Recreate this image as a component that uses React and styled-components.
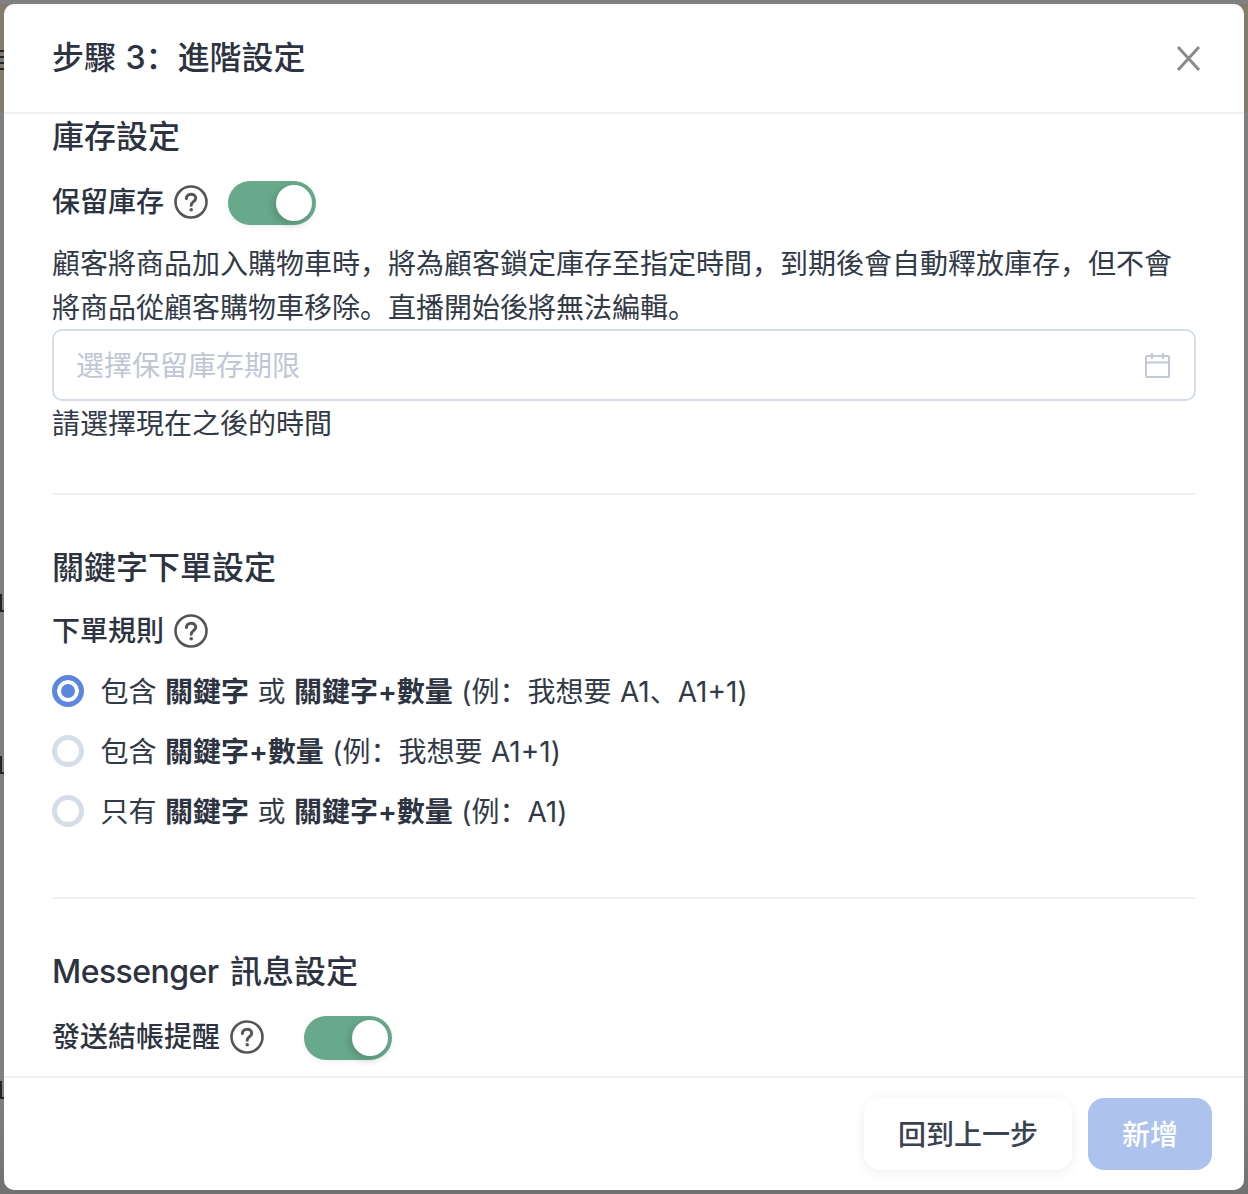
import styled, { createGlobalStyle } from "styled-components";

const GlobalStyle = createGlobalStyle`
  * {
    box-sizing: border-box;
  }
  html, body {
    margin: 0;
    padding: 0;
  }
  body {
    font-family: Inter, "Noto Sans CJK SC", "Noto Sans CJK TC", sans-serif;
    color: #333a47;
  }
`;

const Overlay = styled.div`
  position: relative;
  width: 1248px;
  height: 1194px;
  padding: 4px;
  overflow: hidden;
  background: linear-gradient(
    #808080 0 4px,
    #837b6b 4px 112px,
    #7f7f7f 112px 1100px,
    #727272 1190px
  );
`;

const PageMark = styled.span`
  position: absolute;
  left: 0;
  top: ${(p) => p.$top}px;
  width: 4px;
  height: 18px;
  border-left: 2px solid #22252c;
  border-bottom: 2px solid #22252c;
`;

const MenuMark = styled.span`
  position: absolute;
  left: 0;
  top: 50px;
  width: 4px;
  height: 20px;
  background: repeating-linear-gradient(#22252c 0 2px, transparent 2px 6px);
`;

const Modal = styled.div`
  position: relative;
  height: 100%;
  display: flex;
  flex-direction: column;
  background: #fff;
  border-radius: 10px;
  overflow: hidden;
`;

const Header = styled.header`
  flex: none;
  height: 110px;
  padding: 0 42px 0 48px;
  display: flex;
  align-items: center;
  justify-content: space-between;
  border-bottom: 2px solid #f0f1f2;
`;

const Title = styled.h1`
  margin: 0;
  font-size: 32px;
  line-height: 44px;
  font-weight: 500;
  color: #2d3340;
  word-spacing: 1px;
`;

const CloseButton = styled.button`
  width: 28px;
  height: 28px;
  padding: 0;
  border: 0;
  background: none;
  display: flex;
  color: #8a8a8a;
`;

const Body = styled.div`
  flex: 1;
  min-height: 0;
  overflow: hidden;
  padding: 1px 48px 0;
`;

const Section = styled.section`
  padding-bottom: ${(p) => p.$bottom || 0}px;
  padding-top: ${(p) => p.$top || 0}px;
  border-bottom: ${(p) => (p.$divider ? "2px solid #f0f1f2" : "0")};
`;

const SectionTitle = styled.h2`
  margin: 0;
  font-size: 32px;
  line-height: 44px;
  font-weight: 500;
  color: #2d3340;
`;

const LatinWord = styled.span`
  letter-spacing: -0.55px;
  margin-right: 3px;
`;

const FieldRow = styled.div`
  display: flex;
  align-items: center;
  height: 44px;
  margin-top: ${(p) => p.$top}px;
`;

const Label = styled.span`
  margin-bottom: 2px;
  font-size: 28px;
  line-height: 44px;
  font-weight: 500;
  color: #2d3340;
`;

const HelpIcon = styled.svg`
  flex: none;
  width: 34px;
  height: 34px;
  margin: 0 0 2px 10px;
  color: #555;
`;

const Toggle = styled.span`
  flex: none;
  width: 88px;
  height: 44px;
  margin-left: ${(p) => p.$left}px;
  padding: 4px;
  display: flex;
  justify-content: flex-end;
  border-radius: 22px;
  background: #68a98c;
  box-shadow: 0 2px 6px rgba(0, 0, 0, 0.06);
`;

const Knob = styled.span`
  width: 36px;
  height: 36px;
  border-radius: 50%;
  background: #fff;
  box-shadow: -3px 3px 8px rgba(0, 0, 0, 0.16);
`;

const Description = styled.p`
  margin: 17px 0 -1px;
  font-size: 28px;
  line-height: 44px;
  color: #333a47;
`;

const DateInput = styled.div`
  height: 72px;
  padding: 0 24px 0 22px;
  display: flex;
  align-items: center;
  justify-content: space-between;
  border: 2px solid #d5dde6;
  border-radius: 10px;
`;

const Placeholder = styled.span`
  margin-bottom: 2px;
  font-size: 28px;
  color: #c0c6d4;
`;

const Hint = styled.div`
  padding-top: 1px;
  height: 45px;
  font-size: 28px;
  line-height: 44px;
  color: #333a47;
`;

const RadioList = styled.div`
  margin-top: 7px;
`;

const RadioRow = styled.label`
  height: 60px;
  display: flex;
  align-items: center;
  gap: 16.5px;
  font-size: 28px;
  color: #333a47;
  white-space: pre;
  word-spacing: 0.6px;

  b {
    font-weight: 600;
    color: #2d3340;
  }
`;

const RadioText = styled.span`
  margin-bottom: 2px;
`;

const RadioMark = styled.span`
  flex: none;
  width: 32px;
  height: 32px;
  border-radius: 50%;
  border: 5px solid ${(p) => (p.$checked ? "#5d86e0" : "#d5dee8")};
  background: ${(p) => (p.$checked ? "#5d86e0" : "#fff")};
  box-shadow: ${(p) => (p.$checked ? "inset 0 0 0 4px #fff" : "none")};
`;

const Footer = styled.footer`
  flex: none;
  height: 114px;
  padding: 20px 32px 0 0;
  display: flex;
  justify-content: flex-end;
  gap: 16px;
  border-top: 2px solid #f0f1f2;
`;

const Button = styled.button`
  height: 72px;
  width: ${(p) => p.$width}px;
  padding: 0 0 2px;
  border: 0;
  border-radius: 16px;
  font-family: inherit;
  font-size: 28px;
  font-weight: 500;
  color: ${(p) => (p.$primary ? "#fff" : "#3b4252")};
  background: ${(p) => (p.$primary ? "#aec2ee" : "#fff")};
  box-shadow: ${(p) => (p.$primary ? "none" : "0 2px 14px rgba(0, 0, 0, 0.07)")};
`;

const Help = () => (
  <HelpIcon viewBox="0 0 34 34" fill="none">
    <circle cx="17" cy="17" r="15.5" stroke="currentColor" strokeWidth="2.6" />
    <path
      d="M12.4 13.6c0-2.7 2-4.3 4.7-4.3s4.6 1.6 4.6 3.9c0 3.4-4.5 3.4-4.5 7"
      stroke="currentColor"
      strokeWidth="3"
      strokeLinecap="round"
    />
    <circle cx="17.2" cy="24.8" r="1.8" fill="currentColor" />
  </HelpIcon>
);

const CalendarIcon = () => (
  <svg width="26" height="26" viewBox="0 0 26 26" fill="none" stroke="#c3c8d6" strokeWidth="2">
    <rect x="2" y="4" width="23" height="21" rx="1" />
    <path d="M2 10.5h23M8 1v6M19 1v6" />
  </svg>
);

const CloseIcon = () => (
  <svg width="28" height="28" viewBox="0 0 28 28" fill="none" stroke="currentColor" strokeWidth="3">
    <path d="M4 3l21 23M25 3L4 26" />
  </svg>
);

const SwitchOn = ({ left }) => (
  <Toggle $left={left}>
    <Knob />
  </Toggle>
);

const rules = [
  {
    checked: true,
    content: (
      <>
        包含 <b>關鍵字</b> 或 <b>關鍵字+數量</b> (例：我想要 A1、A1+1)
      </>
    ),
  },
  {
    checked: false,
    content: (
      <>
        包含 <b>關鍵字+數量</b> (例：我想要 A1+1)
      </>
    ),
  },
  {
    checked: false,
    content: (
      <>
        只有 <b>關鍵字</b> 或 <b>關鍵字+數量</b> (例：A1)
      </>
    ),
  },
];

export default function App() {
  return (
    <>
      <GlobalStyle />
      <Overlay>
        <MenuMark />
        <PageMark $top={594} />
        <PageMark $top={756} />
        <PageMark $top={1081} />
        <Modal>
          <Header>
            <Title>步驟 3：進階設定</Title>
            <CloseButton>
              <CloseIcon />
            </CloseButton>
          </Header>
          <Body>
            <Section $divider $bottom={47}>
              <SectionTitle>庫存設定</SectionTitle>
              <FieldRow $top={22}>
                <Label>保留庫存</Label>
                <Help />
                <SwitchOn left={20} />
              </FieldRow>
              <Description>
                顧客將商品加入購物車時，將為顧客鎖定庫存至指定時間，到期後會自動釋放庫存，但不會將商品從顧客購物車移除。直播開始後將無法編輯。
              </Description>
              <DateInput>
                <Placeholder>選擇保留庫存期限</Placeholder>
                <CalendarIcon />
              </DateInput>
              <Hint>請選擇現在之後的時間</Hint>
            </Section>
            <Section $divider $top={51} $bottom={56}>
              <SectionTitle>關鍵字下單設定</SectionTitle>
              <FieldRow $top={20}>
                <Label>下單規則</Label>
                <Help />
              </FieldRow>
              <RadioList>
                {rules.map((rule, i) => (
                  <RadioRow key={i}>
                    <RadioMark $checked={rule.checked} />
                    <RadioText>{rule.content}</RadioText>
                  </RadioRow>
                ))}
              </RadioList>
            </Section>
            <Section $top={51}>
              <SectionTitle>
                <LatinWord>Messenger</LatinWord> 訊息設定
              </SectionTitle>
              <FieldRow $top={22}>
                <Label>發送結帳提醒</Label>
                <Help />
                <SwitchOn left={40} />
              </FieldRow>
            </Section>
          </Body>
          <Footer>
            <Button $width={208}>回到上一步</Button>
            <Button $primary $width={124}>
              新增
            </Button>
          </Footer>
        </Modal>
      </Overlay>
    </>
  );
}
